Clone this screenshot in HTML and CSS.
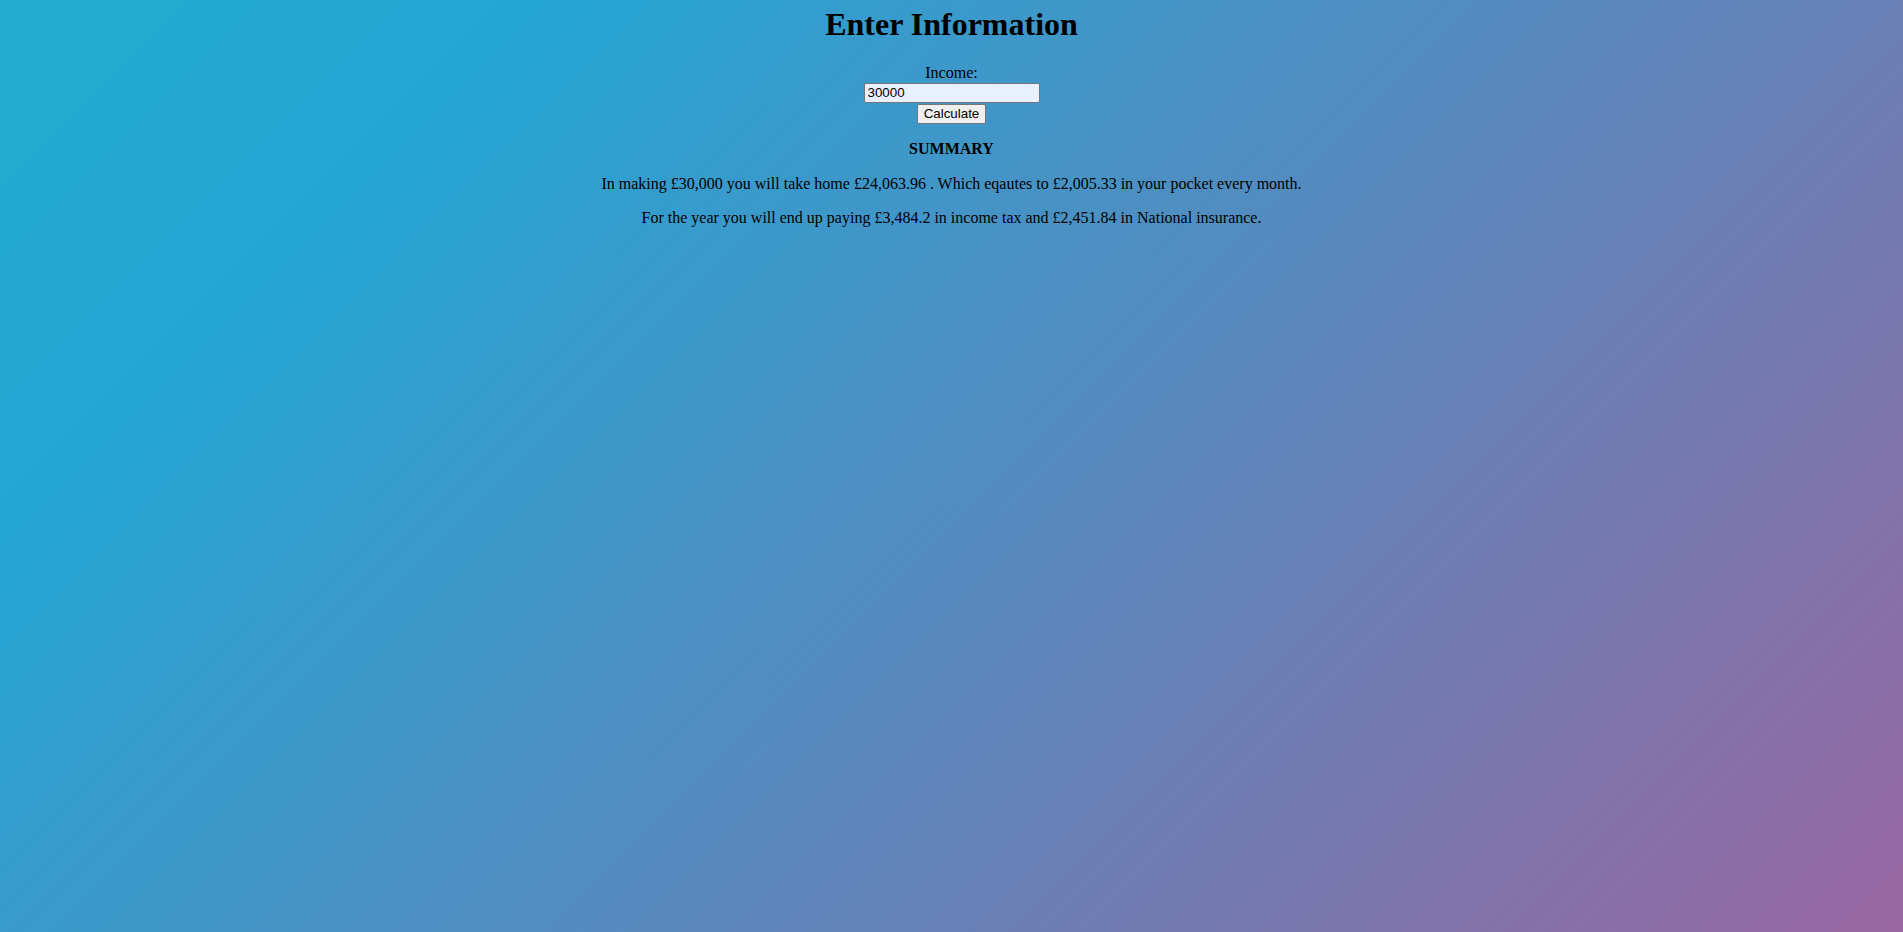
FILE: index.html
```html
<!DOCTYPE html>
<html lang="en">
<head>
<meta charset="utf-8">
<title>Income Calculator</title>
<link rel="stylesheet" href="styles.css">
</head>
<body class="page">
  <h1 class="title">Enter Information</h1>
  <form class="calc-form">
    <label class="field-label" for="income">Income:</label><br>
    <input class="field-input" id="income" type="text" value="30000"><br>
    <button class="calc-btn" type="button">Calculate</button>
  </form>
  <p class="summary-title">SUMMARY</p>
  <p class="summary-line">In making £30,000 you will take home £24,063.96 . Which eqautes to £2,005.33 in your pocket every month.</p>
  <p class="summary-line">For the year you will end up paying £3,484.2 in income tax and £2,451.84 in National insurance.</p>
</body>
</html>
```
FILE: styles.css
```css
html {
  min-height: 100%;
  background: linear-gradient(135deg, #23d5ab -2342px, #23a6d5 375px, #e73c7e 3091px);
}

.page {
  margin: 0;
  padding: 6px 8px 8px;
  text-align: center;
  font-family: "Liberation Serif", "Times New Roman", serif;
  font-size: 16px;
  color: #000;
}

.title {
  margin: 0 0 21.44px;
  font-size: 32px;
  font-weight: bold;
}

.calc-form {
  margin: 0;
}

.field-input {
  box-sizing: border-box;
  width: 176px;
  height: 20px;
  margin: 0;
  padding: 1px 3px;
  border: 1px solid #767676;
  border-radius: 2px;
  background-color: #e8f0fe;
  font-family: "Liberation Sans", Arial, sans-serif;
  font-size: 13.333px;
  color: #000;
  vertical-align: middle;
}

.calc-btn {
  box-sizing: border-box;
  height: 20px;
  margin: 1px 0 0;
  padding: 1px 6px;
  border: 1px solid #767676;
  border-radius: 2px;
  background-color: #efefef;
  font-family: "Liberation Sans", Arial, sans-serif;
  font-size: 13.333px;
  color: #000;
  vertical-align: baseline;
}

.summary-title {
  margin: 16px 0 17px;
  font-weight: bold;
}

.summary-line {
  margin: 16px 0;
}
```
